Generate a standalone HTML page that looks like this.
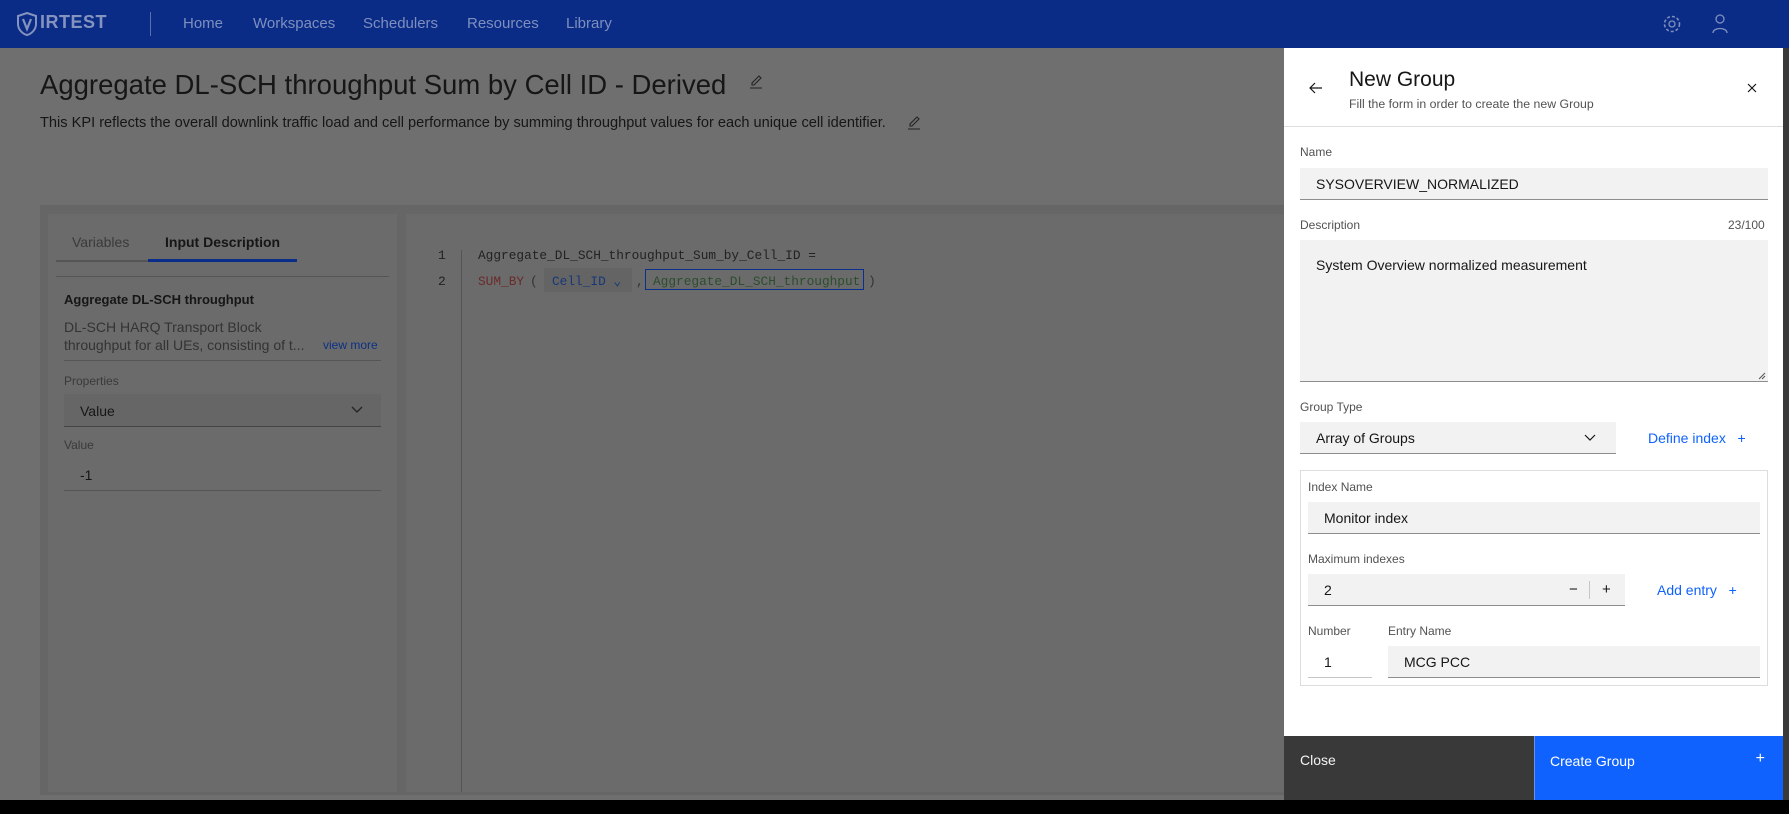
<!DOCTYPE html>
<html><head><meta charset="utf-8">
<style>
*{box-sizing:border-box;margin:0;padding:0}
body{width:1789px;height:814px;overflow:hidden;background:#000;font-family:"Liberation Sans",sans-serif;position:relative}
.abs{position:absolute}
.nav{left:0;top:0;width:1789px;height:48px;background:#0b2c86}
.nav span{position:absolute;top:15px;font-size:15px;color:#7e8fbf}
.bg{left:0;top:48px;width:1789px;height:752px;background:#6f6f6f;overflow:hidden}
.mono{font-family:"Liberation Mono",monospace}
.lbl{font-size:12px;color:#525252}
.inp{background:#f2f2f2;border-bottom:1px solid #8d8d8d;font-size:14px;color:#161616;padding-left:16px;display:flex;align-items:center}
.blue{color:#0f62fe;font-size:14px}
</style></head><body>
<div class="abs nav">
  <svg class="abs" style="left:16px;top:12px" width="22" height="24" viewBox="0 0 22 24"><path d="M11 1 L20 4 V12 C20 18 15 22 11 23 C7 22 2 18 2 12 V4 Z" fill="none" stroke="#8594be" stroke-width="2"/><path d="M7 7 L11 17 L15 7" fill="none" stroke="#8594be" stroke-width="2.2"/></svg>
  <span style="left:40px;top:12px;font-size:18px;font-weight:bold;letter-spacing:0.5px;color:#8594be">IRTEST</span>
  <div class="abs" style="left:150px;top:12px;width:1px;height:24px;background:#5c6fa8"></div>
  <span style="left:183px">Home</span><span style="left:253px">Workspaces</span><span style="left:363px">Schedulers</span><span style="left:467px">Resources</span><span style="left:566px">Library</span>
  <svg class="abs" style="left:1662px;top:14px" width="20" height="20" viewBox="0 0 20 20"><circle cx="10" cy="10" r="3" fill="none" stroke="#7e8fbf" stroke-width="1.3"/><circle cx="10" cy="10" r="7.5" fill="none" stroke="#7e8fbf" stroke-width="1.6" stroke-dasharray="3 2"/></svg>
  <svg class="abs" style="left:1710px;top:13px" width="20" height="22" viewBox="0 0 20 22"><circle cx="10" cy="6" r="4" fill="none" stroke="#7e8fbf" stroke-width="1.3"/><path d="M3 20 C3 14 17 14 17 20" fill="none" stroke="#7e8fbf" stroke-width="1.3"/></svg>
</div>
<div class="abs bg">
  <div class="abs" style="left:40px;top:21px;font-size:27.5px;color:#161616">Aggregate DL-SCH throughput Sum by Cell ID - Derived</div>
  <svg class="abs" style="left:748px;top:26px" width="16" height="16" viewBox="0 0 16 16"><path d="M2 14 H14 M4 11 L4 9 L11 2 L13 4 L6 11 Z" fill="none" stroke="#222" stroke-width="1.1"/></svg>
  <div class="abs" style="left:40px;top:67px;font-size:14.6px;color:#161616">This KPI reflects the overall downlink traffic load and cell performance by summing throughput values for each unique cell identifier.</div>
  <svg class="abs" style="left:906px;top:67px" width="16" height="16" viewBox="0 0 16 16"><path d="M2 14 H14 M4 11 L4 9 L11 2 L13 4 L6 11 Z" fill="none" stroke="#222" stroke-width="1.1"/></svg>
  <div class="abs" style="left:40px;top:157px;width:1260px;height:590px;background:#666"></div>
  <div class="abs" style="left:48px;top:166px;width:349px;height:578px;background:#6b6b6b">
    <div class="abs" style="left:24px;top:20px;font-size:14px;color:#3a3a3a">Variables</div>
    <div class="abs" style="left:117px;top:20px;font-size:14px;font-weight:bold;color:#161616">Input Description</div>
    <div class="abs" style="left:8px;top:46px;width:92px;height:2px;background:#555"></div>
    <div class="abs" style="left:100px;top:45px;width:149px;height:3px;background:#0a2d8a"></div>
    <div class="abs" style="left:8px;top:62px;width:333px;height:1px;background:#555"></div>
    <div class="abs" style="left:16px;top:78px;font-size:13px;font-weight:bold;color:#161616">Aggregate DL-SCH throughput</div>
    <div class="abs" style="left:16px;top:104px;font-size:14px;color:#333;line-height:18px">DL-SCH HARQ Transport Block<br>throughput for all UEs, consisting of t...</div>
    <div class="abs" style="left:275px;top:124px;font-size:12px;color:#0b3184">view more</div>
    <div class="abs" style="left:16px;top:146px;width:317px;height:1px;background:#555"></div>
    <div class="abs" style="left:16px;top:160px;font-size:12px;color:#3a3a3a">Properties</div>
    <div class="abs" style="left:16px;top:180px;width:317px;height:33px;background:#666;border-bottom:1px solid #444;font-size:14px;color:#161616;padding:9px 0 0 16px">Value</div>
    <svg class="abs" style="left:303px;top:192px" width="12" height="8" viewBox="0 0 12 8"><path d="M1 1 L6 6 L11 1" fill="none" stroke="#222" stroke-width="1.3"/></svg>
    <div class="abs" style="left:16px;top:224px;font-size:12px;color:#3a3a3a">Value</div>
    <div class="abs" style="left:16px;top:244px;width:317px;height:33px;border-bottom:1px solid #555;font-size:14px;color:#161616;padding:9px 0 0 16px">-1</div>
  </div>
  <div class="abs" style="left:406px;top:166px;width:900px;height:578px;background:#6b6b6b">
    <div class="abs" style="left:55px;top:36px;width:1px;height:542px;background:#555"></div>
    <div class="abs mono" style="left:32px;top:34px;font-size:13px;color:#222">1</div>
    <div class="abs mono" style="left:32px;top:60px;font-size:13px;color:#222">2</div>
    <div class="abs mono" style="left:72px;top:34px;font-size:12.8px;color:#222">Aggregate_DL_SCH_throughput_Sum_by_Cell_ID =</div>
    <div class="abs mono" style="left:72px;top:60px;font-size:12.8px;color:#6a2a2a">SUM_BY</div>
    <div class="abs mono" style="left:124px;top:60px;font-size:13px;color:#333">(</div>
    <div class="abs mono" style="left:138px;top:54px;width:88px;height:24px;background:#646464;font-size:12.8px;color:#163878;padding:6px 0 0 8px">Cell_ID ⌄</div>
    <div class="abs mono" style="left:230px;top:60px;font-size:13px;color:#333">,</div>
    <div class="abs mono" style="left:239px;top:55px;width:219px;height:21px;border:1px solid #0b2f8c;font-size:12.8px;color:#2d4d2d;padding:4px 0 0 7px">Aggregate_DL_SCH_throughput</div>
    <div class="abs mono" style="left:462px;top:60px;font-size:13px;color:#333">)</div>
  </div>
</div>
<div class="abs" style="left:1783px;top:48px;width:6px;height:752px;background:#3a3a3a"></div>
<div class="abs" style="left:1284px;top:48px;width:499px;height:688px;background:#fff">
  <svg class="abs" style="left:24px;top:32px" width="16" height="16" viewBox="0 0 16 16"><path d="M14 8 H2 M7 3 L2 8 L7 13" fill="none" stroke="#161616" stroke-width="1.2"/></svg>
  <div class="abs" style="left:65px;top:20px;font-size:21px;color:#161616">New Group</div>
  <div class="abs" style="left:65px;top:49px;font-size:12.3px;color:#525252">Fill the form in order to create the new Group</div>
  <svg class="abs" style="left:462px;top:34px" width="12" height="12" viewBox="0 0 12 12"><path d="M2 2 L10 10 M10 2 L2 10" stroke="#161616" stroke-width="1.2"/></svg>
  <div class="abs" style="left:0;top:78px;width:499px;height:1px;background:#ddd"></div>
  <div class="abs lbl" style="left:16px;top:97px">Name</div>
  <div class="abs inp" style="left:16px;top:120px;width:468px;height:32px">SYSOVERVIEW_NORMALIZED</div>
  <div class="abs lbl" style="left:16px;top:170px">Description</div>
  <div class="abs lbl" style="left:444px;top:170px">23/100</div>
  <div class="abs inp" style="left:16px;top:192px;width:468px;height:142px;align-items:flex-start;padding-top:17px">System Overview normalized measurement</div>
  <svg class="abs" style="left:474px;top:324px" width="8" height="8" viewBox="0 0 8 8"><path d="M7 1 L1 7 M7 4 L4 7" stroke="#555" stroke-width="1"/></svg>
  <div class="abs lbl" style="left:16px;top:352px">Group Type</div>
  <div class="abs inp" style="left:16px;top:374px;width:316px;height:32px">Array of Groups</div>
  <svg class="abs" style="left:300px;top:386px" width="12" height="8" viewBox="0 0 12 8"><path d="M1 1 L6 6 L11 1" fill="none" stroke="#161616" stroke-width="1.2"/></svg>
  <div class="abs blue" style="left:364px;top:382px">Define index&nbsp;&nbsp;&nbsp;+</div>
  <div class="abs" style="left:16px;top:422px;width:468px;height:216px;border:1px solid #ddd"></div>
  <div class="abs lbl" style="left:24px;top:432px">Index Name</div>
  <div class="abs inp" style="left:24px;top:454px;width:452px;height:32px">Monitor index</div>
  <div class="abs lbl" style="left:24px;top:504px">Maximum indexes</div>
  <div class="abs inp" style="left:24px;top:526px;width:317px;height:32px">2</div>
  <div class="abs" style="left:285px;top:533px;font-size:15px;color:#161616">−</div>
  <div class="abs" style="left:305px;top:533px;width:1px;height:18px;background:#c6c6c6"></div>
  <div class="abs" style="left:318px;top:533px;font-size:15px;color:#161616">+</div>
  <div class="abs blue" style="left:373px;top:534px">Add entry&nbsp;&nbsp;&nbsp;+</div>
  <div class="abs lbl" style="left:24px;top:576px">Number</div>
  <div class="abs lbl" style="left:104px;top:576px">Entry Name</div>
  <div class="abs" style="left:24px;top:598px;width:64px;height:32px;border-bottom:1px solid #c6c6c6;font-size:14px;color:#161616;padding:8px 0 0 16px">1</div>
  <div class="abs inp" style="left:104px;top:598px;width:372px;height:32px">MCG PCC</div>
</div>
<div class="abs" style="left:1284px;top:736px;width:250px;height:64px;background:#393939;color:#f4f4f4;font-size:14px;padding:16px 0 0 16px">Close</div>
<div class="abs" style="left:1534px;top:736px;width:1px;height:64px;background:#6f8fd8"></div>
<div class="abs" style="left:1535px;top:736px;width:248px;height:64px;background:#0f62fe;color:#fff;font-size:14px;padding:17px 0 0 15px">Create Group<span style="position:absolute;right:18px;top:14px;font-size:16px">+</span></div>
</body></html>
